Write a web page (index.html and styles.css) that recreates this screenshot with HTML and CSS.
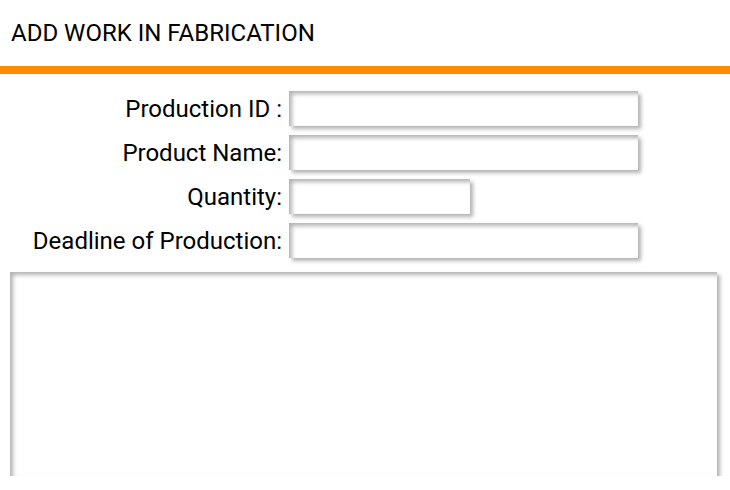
FILE: index.html
```html
<!DOCTYPE html>
<html>
<head>
<meta charset="utf-8">
<link rel="stylesheet" href="styles.css">
</head>
<body>
<header class="header">
  <h1 class="title">ADD WORK IN FABRICATION</h1>
</header>
<div class="accent"></div>
<form class="form">
  <div class="fields">
    <label class="label">Production ID :</label>
    <input class="field" type="text">
    <label class="label">Product Name:</label>
    <input class="field" type="text">
    <label class="label">Quantity:</label>
    <input class="field field-short" type="text">
    <label class="label">Deadline of Production:</label>
    <input class="field" type="text">
  </div>
  <textarea class="notes"></textarea>
</form>
</body>
</html>
```
FILE: styles.css
```css
html, body {
  margin: 0;
  padding: 0;
  background: #ffffff;
  font-family: Roboto, "Liberation Sans", sans-serif;
  color: #000000;
}
.header {
  height: 66px;
  display: flex;
  align-items: center;
  padding-left: 11px;
}
.title {
  margin: 0;
  font-size: 24px;
  font-weight: 400;
  color: #000000;
}
.accent {
  height: 8px;
  background: #ff8c00;
}
.form {
  padding: 17px 0 0 10px;
}
.fields {
  display: grid;
  grid-template-columns: 272px 349px;
  grid-auto-rows: 35px;
  column-gap: 7px;
  row-gap: 9px;
  align-items: center;
}
.label {
  text-align: right;
  font-size: 24px;
  line-height: 33px;
  padding-top: 2px;
  color: #000000;
}
.field {
  box-sizing: border-box;
  height: 35px;
  width: 349px;
  border: none;
  outline: none;
  background: #ffffff;
  box-shadow: inset 3px 3px 4px rgba(0,0,0,0.3), 3px 3px 4px rgba(0,0,0,0.3);
  margin: 0;
  padding: 0 6px;
  font-size: 16px;
}
.field-short {
  width: 181px;
}
.notes {
  display: block;
  box-sizing: border-box;
  margin-top: 14px;
  width: 707px;
  height: 204px;
  border: none;
  outline: none;
  resize: none;
  background: #ffffff;
  box-shadow: inset 3px 3px 4px rgba(0,0,0,0.3), 3px 3px 4px rgba(0,0,0,0.3);
  padding: 6px;
  font-family: Roboto, "Liberation Sans", sans-serif;
}
```
